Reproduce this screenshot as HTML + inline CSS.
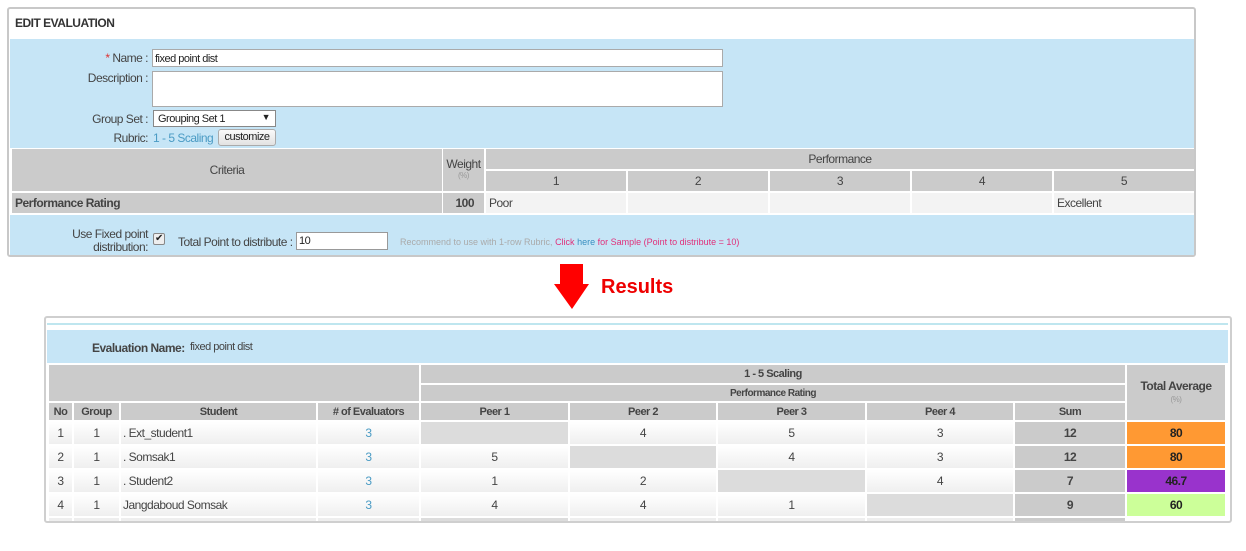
<!DOCTYPE html>
<html><head><meta charset="utf-8"><style>
*{margin:0;padding:0;box-sizing:border-box}
body{width:1246px;height:551px;background:#fff;font-family:"Liberation Sans",Arial,sans-serif;font-size:12px;color:#444;position:relative;overflow:hidden;letter-spacing:-0.5px}
.a{position:absolute}
.c{position:absolute;display:flex;align-items:center;justify-content:center;white-space:nowrap}
.g{background:#cbcbcb}
.d{background:linear-gradient(#fff,#efefef)}
.e{background:#dcdcdc}
.lbl{position:absolute;text-align:right;color:#444;font-size:12px}
</style></head><body>
<div class="a" style="left:7px;top:7px;width:1189px;height:250px;border:2px solid #c8c8c8;border-radius:3px;background:#fff"></div>
<div class="a" style="left:15px;top:16px;font-size:12px;font-weight:bold;color:#333">EDIT EVALUATION</div>
<div class="a" style="left:10px;top:39px;width:1184px;height:110px;background:#c6e5f6"></div>
<div class="lbl" style="left:40px;top:51px;width:108px"><span style="color:#d33">*</span> Name :</div>
<div class="a" style="left:152px;top:49px;width:571px;height:18px;background:#fff;border:1px solid #aaa;font-size:11px;padding:3px 2px;color:#222">fixed point dist</div>
<div class="lbl" style="left:40px;top:71px;width:108px">Description :</div>
<div class="a" style="left:152px;top:71px;width:571px;height:36px;background:#fff;border:1px solid #aaa"></div>
<div class="lbl" style="left:40px;top:112px;width:108px">Group Set :</div>
<div class="a" style="left:153px;top:110px;width:123px;height:17px;background:#fff;border:1px solid #888;font-size:11px;padding:2px 4px;color:#222">Grouping Set 1<span style="position:absolute;right:5px;top:1px;font-size:9px">▼</span></div>
<div class="lbl" style="left:40px;top:131px;width:108px">Rubric:</div>
<div class="a" style="left:153px;top:131px;color:#4a9bc4">1 - 5 Scaling</div>
<div class="a" style="left:218px;top:129px;width:58px;height:17px;background:linear-gradient(#fafafa,#e2e2e2);border:1px solid #aaa;border-radius:3px;font-size:11px;text-align:center;line-height:15px;color:#222">customize</div>
<div class="a" style="left:10px;top:148px;width:1184px;height:67px;background:#fff"></div>
<div class="c g" style="left:12px;top:149px;width:430px;height:42px">Criteria</div>
<div class="c g" style="left:443px;top:149px;width:41px;height:42px;flex-direction:column;line-height:12px">Weight<span style="font-size:8px;color:#999">(%)</span></div>
<div class="c g" style="left:486px;top:149px;width:708px;height:20px">Performance</div>
<div class="c g" style="left:486px;top:171px;width:140px;height:20px">1</div>
<div class="c g" style="left:628px;top:171px;width:140px;height:20px">2</div>
<div class="c g" style="left:770px;top:171px;width:140px;height:20px">3</div>
<div class="c g" style="left:912px;top:171px;width:140px;height:20px">4</div>
<div class="c g" style="left:1054px;top:171px;width:140px;height:20px">5</div>
<div class="c g" style="left:12px;top:193px;width:430px;height:20px;justify-content:flex-start;padding-left:3px;font-weight:bold">Performance Rating</div>
<div class="c g" style="left:443px;top:193px;width:41px;height:20px;justify-content:flex-end;padding-right:10px;font-weight:bold">100</div>
<div class="c" style="left:486px;top:193px;width:140px;height:20px;background:#f3f3f3;justify-content:flex-start;padding-left:3px">Poor</div>
<div class="c" style="left:628px;top:193px;width:140px;height:20px;background:#f3f3f3"></div>
<div class="c" style="left:770px;top:193px;width:140px;height:20px;background:#f3f3f3"></div>
<div class="c" style="left:912px;top:193px;width:140px;height:20px;background:#f3f3f3"></div>
<div class="c" style="left:1054px;top:193px;width:140px;height:20px;background:#f3f3f3;justify-content:flex-start;padding-left:3px">Excellent</div>
<div class="a" style="left:10px;top:215px;width:1184px;height:40px;background:#c6e5f6"></div>
<div class="lbl" style="left:40px;top:228px;width:108px;line-height:13px">Use Fixed point<br>distribution:</div>
<div class="a" style="left:153px;top:233px;width:12px;height:12px;background:#eee;border:1px solid #888;border-radius:2px;font-size:10px;line-height:10px;text-align:center;color:#222">✔</div>
<div class="a" style="left:178px;top:235px">Total Point to distribute :</div>
<div class="a" style="left:296px;top:232px;width:92px;height:18px;background:#fff;border:1px solid #999;font-size:11px;padding:2px;color:#222">10</div>
<div class="a" style="left:400px;top:237px;font-size:9px;color:#aaa;white-space:nowrap;letter-spacing:0">Recommend to use with 1-row Rubric, <span style="color:#e0307a">Click</span> <span style="color:#3a8fc0">here</span> <span style="color:#e0307a">for Sample (Point to distribute = 10)</span></div>
<svg class="a" style="left:553px;top:264px" width="38" height="46"><polygon points="7,0 30,0 30,20 36,20 19,45 1,20 7,20" fill="#f00"/></svg>
<div class="a" style="left:601px;top:276px;font-size:20px;font-weight:bold;color:#e00;letter-spacing:0">Results</div>
<div class="a" style="left:44px;top:316px;width:1188px;height:207px;border:2px solid #cfcfcf;border-radius:3px;background:#fff"></div>
<div class="a" style="left:47px;top:323px;width:1181px;height:2px;background:#bfe6ef"></div>
<div class="a" style="left:47px;top:330px;width:1181px;height:33px;background:#c6e5f6"></div>
<div class="a" style="left:92px;top:341px;font-weight:bold;color:#444">Evaluation Name:</div>
<div class="a" style="left:190px;top:341px;font-size:11px;color:#444">fixed point dist</div>
<div class="c g" style="left:49px;top:365px;width:370px;height:36px"></div>
<div class="c g" style="left:421px;top:365px;width:704px;height:18px;font-weight:bold;font-size:11px">1 - 5 Scaling</div>
<div class="c g" style="left:421px;top:385px;width:704px;height:16px;font-weight:bold;font-size:10px">Performance Rating</div>
<div class="c g" style="left:1127px;top:365px;width:98px;height:55px;flex-direction:column;font-weight:bold;line-height:13px">Total Average<span style="font-size:8px;font-weight:normal;color:#999">(%)</span></div>
<div class="c g" style="left:49px;top:403px;width:23px;height:17px;font-weight:bold;font-size:11px">No</div>
<div class="c g" style="left:74px;top:403px;width:45px;height:17px;font-weight:bold;font-size:11px">Group</div>
<div class="c g" style="left:121px;top:403px;width:195px;height:17px;font-weight:bold;font-size:11px">Student</div>
<div class="c g" style="left:318px;top:403px;width:101px;height:17px;font-weight:bold;font-size:11px"># of Evaluators</div>
<div class="c g" style="left:421px;top:403px;width:147px;height:17px;font-weight:bold;font-size:11px">Peer 1</div>
<div class="c g" style="left:570px;top:403px;width:146px;height:17px;font-weight:bold;font-size:11px">Peer 2</div>
<div class="c g" style="left:718px;top:403px;width:147px;height:17px;font-weight:bold;font-size:11px">Peer 3</div>
<div class="c g" style="left:867px;top:403px;width:146px;height:17px;font-weight:bold;font-size:11px">Peer 4</div>
<div class="c g" style="left:1015px;top:403px;width:110px;height:17px;font-weight:bold;font-size:11px">Sum</div>

<div class="c d" style="left:49px;top:422px;width:23px;height:22px">1</div>
<div class="c d" style="left:74px;top:422px;width:45px;height:22px">1</div>
<div class="c d" style="left:121px;top:422px;width:195px;height:22px;justify-content:flex-start;padding-left:2px">. Ext_student1</div>
<div class="c d" style="left:318px;top:422px;width:101px;height:22px;color:#4a9bc4">3</div>
<div class="c e" style="left:421px;top:422px;width:147px;height:22px"></div>
<div class="c d" style="left:570px;top:422px;width:146px;height:22px">4</div>
<div class="c d" style="left:718px;top:422px;width:147px;height:22px">5</div>
<div class="c d" style="left:867px;top:422px;width:146px;height:22px">3</div>
<div class="c g" style="left:1015px;top:422px;width:110px;height:22px;font-weight:bold">12</div>
<div class="c" style="left:1127px;top:422px;width:98px;height:22px;background:#ff9933;font-weight:bold;color:#222">80</div>
<div class="c d" style="left:49px;top:446px;width:23px;height:22px">2</div>
<div class="c d" style="left:74px;top:446px;width:45px;height:22px">1</div>
<div class="c d" style="left:121px;top:446px;width:195px;height:22px;justify-content:flex-start;padding-left:2px">. Somsak1</div>
<div class="c d" style="left:318px;top:446px;width:101px;height:22px;color:#4a9bc4">3</div>
<div class="c d" style="left:421px;top:446px;width:147px;height:22px">5</div>
<div class="c e" style="left:570px;top:446px;width:146px;height:22px"></div>
<div class="c d" style="left:718px;top:446px;width:147px;height:22px">4</div>
<div class="c d" style="left:867px;top:446px;width:146px;height:22px">3</div>
<div class="c g" style="left:1015px;top:446px;width:110px;height:22px;font-weight:bold">12</div>
<div class="c" style="left:1127px;top:446px;width:98px;height:22px;background:#ff9933;font-weight:bold;color:#222">80</div>
<div class="c d" style="left:49px;top:470px;width:23px;height:22px">3</div>
<div class="c d" style="left:74px;top:470px;width:45px;height:22px">1</div>
<div class="c d" style="left:121px;top:470px;width:195px;height:22px;justify-content:flex-start;padding-left:2px">. Student2</div>
<div class="c d" style="left:318px;top:470px;width:101px;height:22px;color:#4a9bc4">3</div>
<div class="c d" style="left:421px;top:470px;width:147px;height:22px">1</div>
<div class="c d" style="left:570px;top:470px;width:146px;height:22px">2</div>
<div class="c e" style="left:718px;top:470px;width:147px;height:22px"></div>
<div class="c d" style="left:867px;top:470px;width:146px;height:22px">4</div>
<div class="c g" style="left:1015px;top:470px;width:110px;height:22px;font-weight:bold">7</div>
<div class="c" style="left:1127px;top:470px;width:98px;height:22px;background:#9933cc;font-weight:bold;color:#222">46.7</div>
<div class="c d" style="left:49px;top:494px;width:23px;height:22px">4</div>
<div class="c d" style="left:74px;top:494px;width:45px;height:22px">1</div>
<div class="c d" style="left:121px;top:494px;width:195px;height:22px;justify-content:flex-start;padding-left:2px">Jangdaboud Somsak</div>
<div class="c d" style="left:318px;top:494px;width:101px;height:22px;color:#4a9bc4">3</div>
<div class="c d" style="left:421px;top:494px;width:147px;height:22px">4</div>
<div class="c d" style="left:570px;top:494px;width:146px;height:22px">4</div>
<div class="c d" style="left:718px;top:494px;width:147px;height:22px">1</div>
<div class="c e" style="left:867px;top:494px;width:146px;height:22px"></div>
<div class="c g" style="left:1015px;top:494px;width:110px;height:22px;font-weight:bold">9</div>
<div class="c" style="left:1127px;top:494px;width:98px;height:22px;background:#ccff99;font-weight:bold;color:#222">60</div>
<div class="a" style="left:49px;top:518px;width:23px;height:3px;background:#eee"></div>
<div class="a" style="left:74px;top:518px;width:45px;height:3px;background:#eee"></div>
<div class="a" style="left:121px;top:518px;width:195px;height:3px;background:#eee"></div>
<div class="a" style="left:318px;top:518px;width:101px;height:3px;background:#eee"></div>
<div class="a" style="left:421px;top:518px;width:147px;height:3px;background:#dcdcdc"></div>
<div class="a" style="left:570px;top:518px;width:146px;height:3px;background:#eee"></div>
<div class="a" style="left:718px;top:518px;width:147px;height:3px;background:#eee"></div>
<div class="a" style="left:867px;top:518px;width:146px;height:3px;background:#eee"></div>
<div class="a" style="left:1015px;top:518px;width:110px;height:3px;background:#cbcbcb"></div>
</body></html>
